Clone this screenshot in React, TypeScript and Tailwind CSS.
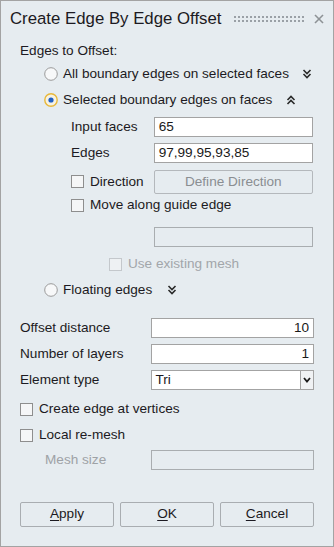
import React from "react";

const font = { fontFamily: '"Liberation Sans", Arial, sans-serif' };

function Radio({ checked }: { checked?: boolean }) {
  return (
    <svg width="14" height="14" viewBox="0 0 14 14" className="shrink-0">
      {checked ? (
        <>
          <circle cx="7" cy="7" r="6.2" fill="#f6f2e4" stroke="#e8b83a" strokeWidth="1.4" />
          <circle cx="7" cy="7" r="2.6" fill="#1f5fc4" />
        </>
      ) : (
        <circle cx="7" cy="7" r="6.3" fill="#f7f8f9" stroke="#9a9a9a" strokeWidth="1" />
      )}
    </svg>
  );
}

function Check({ disabled }: { disabled?: boolean }) {
  return (
    <div
      className={`w-[13px] h-[13px] shrink-0 border ${
        disabled ? "border-[#c4c8cc] bg-[#eef1f3]" : "border-[#8e8e8e] bg-[#f5f6f7]"
      }`}
    />
  );
}

function DoubleChevron({ up }: { up?: boolean }) {
  return (
    <svg width="10" height="10" viewBox="0 0 10 10" className="shrink-0">
      {up ? (
        <g fill="none" stroke="#2a2a2a" strokeWidth="1.6">
          <polyline points="1.5,5 5,1.5 8.5,5" />
          <polyline points="1.5,9 5,5.5 8.5,9" />
        </g>
      ) : (
        <g fill="none" stroke="#2a2a2a" strokeWidth="1.6">
          <polyline points="1.5,1 5,4.5 8.5,1" />
          <polyline points="1.5,5 5,8.5 8.5,5" />
        </g>
      )}
    </svg>
  );
}

function Input({ value, right, disabled, w = "w-[160px]" }: { value?: string; right?: boolean; disabled?: boolean; w?: string }) {
  return (
    <div
      className={`${w} h-[20px] border flex items-center px-[4px] text-[#1a1a1a] ${
        disabled ? "border-[#a9adb0] bg-[#e6ecf0]" : "border-[#a3a3a3] bg-white"
      } ${right ? "justify-end" : "justify-start"}`}
    >
      {value}
    </div>
  );
}

export default function App() {
  return (
    <div
      style={font}
      className="w-[334px] h-[547px] bg-[#e6ecf0] border border-[#a3a3a3] flex flex-col text-[13.6px] text-[#1c1a22] overflow-hidden"
    >
      {/* title */}
      <div className="h-[35px] flex items-center pl-[9px] pr-[9px]">
        <span className="text-[16.8px] text-[#1c1a22] whitespace-nowrap">Create Edge By Edge Offset</span>
        <div className="ml-auto flex flex-col gap-[2px] mr-[10px]">
          <div className="flex gap-[2px]">
            {Array.from({ length: 18 }).map((_, i) => (
              <div key={i} className="w-[2px] h-[2px] bg-[#9aa0a6]" />
            ))}
          </div>
          <div className="flex gap-[2px]">
            {Array.from({ length: 18 }).map((_, i) => (
              <div key={i} className="w-[2px] h-[2px] bg-[#9aa0a6]" />
            ))}
          </div>
        </div>
        <svg width="10" height="10" viewBox="0 0 10 10" className="shrink-0">
          <g stroke="#8e9296" strokeWidth="1.6">
            <line x1="1" y1="1" x2="9" y2="9" />
            <line x1="9" y1="1" x2="1" y2="9" />
          </g>
        </svg>
      </div>

      <div className="flex flex-col pl-[19px] pr-[19px]">
        <div className="h-[18px] mt-[6px] flex items-center">Edges to Offset:</div>

        {/* radio 1 */}
        <div className="h-[20px] mt-[4px] flex items-center pl-[24px]">
          <Radio />
          <span className="ml-[5px] whitespace-nowrap">All boundary edges on selected faces</span>
          <div className="ml-auto mr-[2px]">
            <DoubleChevron />
          </div>
        </div>

        {/* radio 2 */}
        <div className="h-[20px] mt-[6px] flex items-center pl-[24px]">
          <Radio checked />
          <span className="ml-[5px] whitespace-nowrap">Selected boundary edges on faces</span>
          <div className="ml-[14px]">
            <DoubleChevron up />
          </div>
        </div>

        <div className="pl-[51px] pr-[1px] flex flex-col">
          <div className="h-[20px] mt-[7px] flex items-center">
            <span className="w-[83px]">Input faces</span>
            <Input value="65" />
          </div>
          <div className="h-[20px] mt-[6px] flex items-center">
            <span className="w-[83px]">Edges</span>
            <Input value="97,99,95,93,85" />
          </div>
          <div className="h-[24px] mt-[7px] flex items-center">
            <div className="w-[83px] flex items-center">
              <Check />
              <span className="ml-[6px]">Direction</span>
            </div>
            <div className="w-[160px] h-[24px] border border-[#b4b8bc] rounded-[2px] bg-[#e6ecf0] flex items-center justify-center text-[#8a8e92]">
              Define Direction
            </div>
          </div>
          <div className="h-[20px] mt-[1px] flex items-center">
            <Check />
            <span className="ml-[6px]">Move along guide edge</span>
          </div>
          <div className="h-[20px] mt-[12px] flex items-center">
            <span className="w-[83px]" />
            <Input disabled />
          </div>
          <div className="h-[20px] mt-[7px] flex items-center pl-[38px]">
            <Check disabled />
            <span className="ml-[6px] text-[#a2a6aa]">Use existing mesh</span>
          </div>
        </div>

        {/* radio 3 */}
        <div className="h-[20px] mt-[6px] flex items-center pl-[24px]">
          <Radio />
          <span className="ml-[5px] whitespace-nowrap">Floating edges</span>
          <div className="ml-[15px]">
            <DoubleChevron />
          </div>
        </div>

        <div className="h-[20px] mt-[18px] flex items-center">
          <span className="w-[131px]">Offset distance</span>
          <Input value="10" right w="w-[164px]" />
        </div>
        <div className="h-[20px] mt-[6px] flex items-center">
          <span className="w-[131px]">Number of layers</span>
          <Input value="1" right w="w-[164px]" />
        </div>
        <div className="h-[20px] mt-[6px] flex items-center">
          <span className="w-[131px]">Element type</span>
          <div className="w-[164px] h-[20px] border border-[#a3a3a3] bg-white flex items-center">
            <span className="flex-1 pl-[4px]">Tri</span>
            <div className="w-[13px] h-full border-l border-[#a3a3a3] bg-[#f0f2f4] flex items-center justify-center">
              <svg width="8" height="6" viewBox="0 0 8 6">
                <polyline points="1,1 4,4.5 7,1" fill="none" stroke="#1a1a1a" strokeWidth="1.8" />
              </svg>
            </div>
          </div>
        </div>

        <div className="h-[20px] mt-[9px] flex items-center">
          <Check />
          <span className="ml-[6px]">Create edge at vertices</span>
        </div>
        <div className="h-[20px] mt-[6px] flex items-center">
          <Check />
          <span className="ml-[6px]">Local re-mesh</span>
        </div>
        <div className="h-[20px] mt-[5px] flex items-center">
          <span className="w-[131px] pl-[25px] text-[#9ea2a6]">Mesh size</span>
          <Input disabled w="w-[164px]" />
        </div>

        <div className="mt-[32px] flex gap-[6px]">
          {[
            ["A", "pply"],
            ["O", "K"],
            ["C", "ancel"],
          ].map(([u, rest]) => (
            <div
              key={u + rest}
              className="w-[94px] h-[25px] border border-[#a9adb1] rounded-[2px] bg-[#e6ecf0] flex items-center justify-center text-[#1c1a22]"
            >
              <span>
                <span className="underline underline-offset-2">{u}</span>
                {rest}
              </span>
            </div>
          ))}
        </div>
      </div>
    </div>
  );
}
